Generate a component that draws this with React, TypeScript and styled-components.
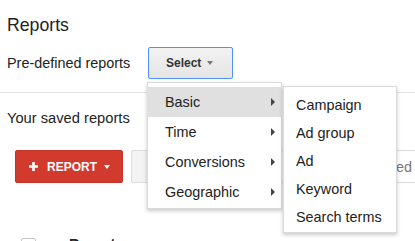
import React from 'react'
import styled, { createGlobalStyle } from 'styled-components'

const GlobalStyle = createGlobalStyle`
  body {
    margin: 0;
    background: #fff;
    font-family: "Liberation Sans", Arial, sans-serif;
    color: #222;
    overflow: hidden;
  }
`

const Page = styled.div`
  width: 415px;
  height: 241px;
  overflow: hidden;
`

const Header = styled.div`
  padding: 15px 7px 0;
`

const Title = styled.h1`
  margin: 0;
  font-size: 17.7px;
  line-height: 20px;
  font-weight: normal;
`

const PredefRow = styled.div`
  display: flex;
  align-items: center;
  margin-top: 12px;
`

const Label = styled.span`
  width: 141px;
  font-size: 14.4px;
  line-height: 17px;
`

const SelectWrap = styled.div`
  position: relative;
`

const SelectButton = styled.button`
  display: flex;
  align-items: center;
  gap: 6px;
  height: 32px;
  width: 85px;
  padding: 0 0 0 17px;
  border: 1px solid #4d90fe;
  border-radius: 2px;
  background: linear-gradient(#f2f2f2, #e5e5e5);
  font-family: inherit;
  font-size: 12px;
  font-weight: bold;
  color: #333;
`

const Caret = styled.span<{ $color: string }>`
  width: 0;
  height: 0;
  border-left: 3px solid transparent;
  border-right: 3px solid transparent;
  border-top: 4px solid ${(p) => p.$color};
`

const Divider = styled.div`
  height: 1px;
  background: #e3e3e3;
  margin-top: 13px;
`

const Saved = styled.div`
  padding: 0 0 0 7px;
`

const SavedTitle = styled.div`
  margin-top: 17px;
  font-size: 14.7px;
  line-height: 17px;
`

const Toolbar = styled.div`
  display: flex;
  align-items: stretch;
  gap: 8px;
  height: 33px;
  margin-top: 23px;
  padding-left: 8px;
`

const RedButton = styled.div`
  display: flex;
  align-items: center;
  width: 108px;
  box-sizing: border-box;
  padding-left: 13px;
  border-radius: 2px;
  background: #d23a2d;
  border: 1px solid #c53427;
  color: #fff;
  font-size: 12px;
  font-weight: bold;
`

const ReportText = styled.span`
  margin: 0 7px 0 9px;
`

const GrayButton = styled.div`
  width: 120px;
  border: 1px solid #dcdcdc;
  border-radius: 2px;
  background: #f3f3f3;
`

const SearchField = styled.div`
  flex: 1;
  display: flex;
  align-items: center;
  justify-content: flex-end;
  padding-right: 3px;
  border: 1px solid #dcdcdc;
  border-right: none;
  font-size: 14.4px;
  color: #777;
`

const TableHead = styled.div`
  display: flex;
  align-items: flex-start;
  margin-top: 53px;
  padding-left: 14px;
`

const Checkbox = styled.span`
  width: 13px;
  height: 13px;
  margin-top: 2px;
  border: 1px solid #c6c6c6;
  border-radius: 2px;
`

const ColumnTitle = styled.span`
  margin-left: 33px;
  font-size: 14.4px;
  line-height: 17px;
  font-weight: bold;
`

const Menu = styled.div<{ $sub?: boolean }>`
  position: absolute;
  top: ${(p) => (p.$sub ? '-1px' : 'calc(100% + 3px)')};
  left: ${(p) => (p.$sub ? 'calc(100% + 1px)' : '-1px')};
  width: ${(p) => (p.$sub ? '114px' : '135px')};
  box-sizing: border-box;
  padding: 4px 0 1px;
  background: #fff;
  border: 1px solid rgba(0, 0, 0, 0.14);
  box-shadow: 0 2px 4px rgba(0, 0, 0, 0.22);
  z-index: 10;
`

const MenuItem = styled.div<{ $active?: boolean; $sub?: boolean }>`
  position: relative;
  display: flex;
  align-items: center;
  justify-content: space-between;
  height: ${(p) => (p.$sub ? '28px' : '30px')};
  margin: 0 -1px;
  padding: 0 7px 0 ${(p) => (p.$sub ? '13px' : '18px')};
  background: ${(p) => (p.$active ? '#e0e0e0' : 'transparent')};
  font-size: 14.4px;
  color: #222;
  white-space: nowrap;
`

const SubArrow = styled.span`
  width: 0;
  height: 0;
  border-top: 4px solid transparent;
  border-bottom: 4px solid transparent;
  border-left: 4px solid #444;
`

const Plus = () => (
  <svg width="9" height="9" viewBox="0 0 9 9">
    <path d="M4.5 0v9M0 4.5h9" stroke="#fff" strokeWidth="2.6" />
  </svg>
)

const categories = ['Basic', 'Time', 'Conversions', 'Geographic']
const basicReports = ['Campaign', 'Ad group', 'Ad', 'Keyword', 'Search terms']

export default function App() {
  return (
    <Page>
      <GlobalStyle />
      <Header>
        <Title>Reports</Title>
        <PredefRow>
          <Label>Pre-defined reports</Label>
          <SelectWrap>
            <SelectButton>
              Select <Caret $color="#777" />
            </SelectButton>
            <Menu>
              {categories.map((c, i) => (
                <MenuItem key={c} $active={i === 0}>
                  {c}
                  <SubArrow />
                  {i === 0 && (
                    <Menu $sub>
                      {basicReports.map((r) => (
                        <MenuItem key={r} $sub>
                          {r}
                        </MenuItem>
                      ))}
                    </Menu>
                  )}
                </MenuItem>
              ))}
            </Menu>
          </SelectWrap>
        </PredefRow>
      </Header>
      <Divider />
      <Saved>
        <SavedTitle>Your saved reports</SavedTitle>
        <Toolbar>
          <RedButton>
            <Plus />
            <ReportText>REPORT</ReportText>
            <Caret $color="#fff" />
          </RedButton>
          <GrayButton />
          <SearchField>Search saved</SearchField>
        </Toolbar>
        <TableHead>
          <Checkbox />
          <ColumnTitle>Report</ColumnTitle>
        </TableHead>
      </Saved>
    </Page>
  )
}
